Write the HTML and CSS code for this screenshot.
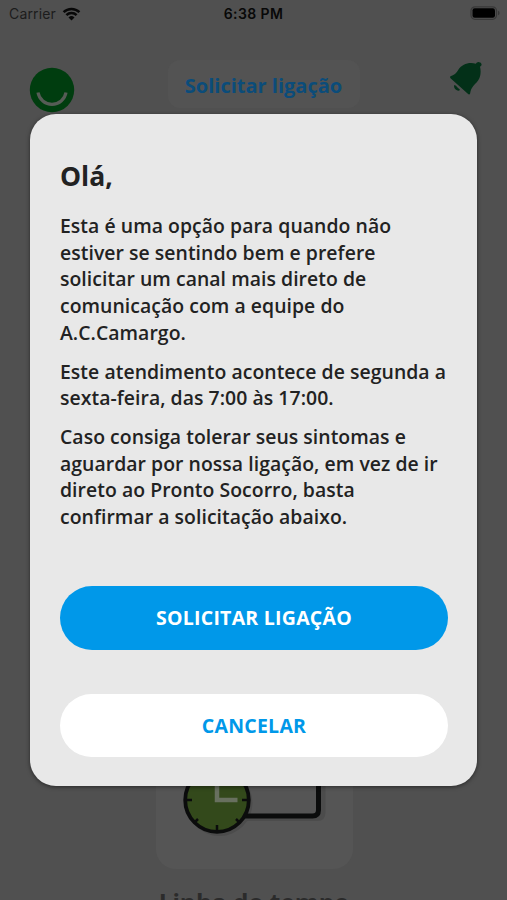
FILE: index.html
```html
<!DOCTYPE html>
<html lang="pt-BR">
<head>
<meta charset="UTF-8">
<meta name="viewport" content="width=device-width, initial-scale=1.0">
<title>Solicitar ligação</title>
<link rel="stylesheet" href="styles.css">
</head>
<body>

<div class="screen">
    <!-- Status bar -->
    <div class="status-bar">
        <div class="carrier">
            <span>Carrier</span>
            <svg width="19" height="14" viewBox="0 0 19 14">
                <path d="M1.6 5.2a11.2 11.2 0 0 1 15.8 0M4.4 8.2a7.2 7.2 0 0 1 10.2 0" fill="none" stroke="#080808" stroke-width="2.5"/>
                <path d="M9.5 13.6L6.5 10.5a4.3 4.3 0 0 1 6 0z" fill="#080808"/>
            </svg>
        </div>
        <span class="time">6:38 PM</span>
        <svg class="battery" width="30" height="15" viewBox="0 0 30 15">
            <rect x="1" y="0.8" width="25.5" height="12.5" rx="4" fill="none" stroke="#383838" stroke-width="1.2"/>
            <rect x="2.5" y="2.3" width="22.5" height="9.5" rx="2.2" fill="#000"/>
            <path d="M28 4.8v4.5q1.6-.6 1.6-2.25T28 4.8z" fill="#383838"/>
        </svg>
    </div>

    <!-- Header -->
    <div class="header">
        <svg class="logo" width="46" height="46" viewBox="0 0 46 46">
            <circle cx="23" cy="23" r="22.2" fill="#003d0f"/>
            <path d="M9 25.5a14.2 14.2 0 0 0 28 0" fill="none" stroke="#565c56" stroke-width="3.2"/>
        </svg>
        <div class="header-title">Solicitar ligação</div>
        <svg class="bell" width="36" height="36" viewBox="0 0 36 36">
            <path d="M2.5 15.2Q7.5 14 10.5 8.5C14 3.3 21 .7 27.8 2.8q1-1.8 2.800-1.7q2.800.4 3 2.200q.1 1.700-1.600 2.500C33.500 12 32.500 18.500 27 23Q22.500 27.500 22 33Q20.800 34.300 19 32L2.500 17.200Q1.500 15.800 2.500 15.200z" fill="#033018"/>
            <path d="M6.2 24Q8.5 24.5 9 26L12 28.7Q11 30.5 8.4 29Q5.4 27 6.2 24z" fill="#033018"/>
        </svg>
    </div>

    <!-- Timeline card -->
    <div class="timeline">
        <div class="timeline-card">
            <svg width="197" height="200" viewBox="0 0 197 200">
                <path d="M65 149.5h96q6 0 6-6V60" fill="none" stroke="#4c4c4c" stroke-width="5"/>
                <circle cx="63.5" cy="134" r="33" fill="#4c4c4c"/>
                <path d="M62 147h94.5q6 0 6-6V60" fill="none" stroke="#0b0c0c" stroke-width="5"/>
                <circle cx="61" cy="131" r="31.8" fill="#33491b" stroke="#0b0c0c" stroke-width="3.8"/>
                <path d="M31 131h5M86 131h5M61 156v5M38.5 153.5l3.5-3.5M83.5 153.5l-3.5-3.5" stroke="#0b0c0c" stroke-width="2.5"/>
                <path d="M61 110v21h20.5" fill="none" stroke="#68705f" stroke-width="4.5"/>
            </svg>
        </div>
        <div class="timeline-title">Linha do tempo</div>
    </div>

    <!-- Confirmation modal -->
    <div class="modal">
        <h2>Olá,</h2>
        <p>Esta é uma opção para quando não<br>
        estiver se sentindo bem e prefere<br>
        solicitar um canal mais direto de<br>
        comunicação com a equipe do<br>
        A.C.Camargo.</p>
        <p>Este atendimento acontece de segunda a<br>
        sexta-feira, das 7:00 às 17:00.</p>
        <p>Caso consiga tolerar seus sintomas e<br>
        aguardar por nossa ligação, em vez de ir<br>
        direto ao Pronto Socorro, basta<br>
        confirmar a solicitação abaixo.</p>
        <div class="btn-container">
            <button class="btn btn-primary">SOLICITAR LIGAÇÃO</button>
            <button class="btn btn-cancel">CANCELAR</button>
        </div>
    </div>
</div>

</body>
</html>
```
FILE: styles.css
```css
body {
    margin: 0;
    font-family: "Open Sans", sans-serif;
    background-color: #505050;
}
.screen {
    position: relative;
    display: flex;
    flex-direction: column;
    height: 900px;
    overflow: hidden;
}
.status-bar {
    display: grid;
    grid-template-columns: 1fr auto 1fr;
    align-items: center;
    height: 27px;
    padding: 0 7px 0 9px;
    box-sizing: border-box;
    font-family: Inter, sans-serif;
    font-size: 14px;
    color: #1c1c1c;
}
.carrier {
    display: flex;
    align-items: center;
    gap: 6px;
    letter-spacing: 0.15px;
}
.time {
    font-weight: 600;
    letter-spacing: 0.4px;
    margin-right: 2px;
    color: #080808;
}
.battery {
    justify-self: end;
}
.header {
    display: flex;
    align-items: flex-start;
    justify-content: space-between;
    padding: 33px 23px 0 29px;
}
.logo {
    margin-top: 7px;
}
.header-title {
    width: 192px;
    height: 48px;
    margin-left: 4px;
    border-radius: 12px;
    background-color: #535353;
    font-size: 20px;
    font-weight: 700;
    line-height: 51px;
    text-align: center;
    white-space: nowrap;
    color: #0b4c7a;
}
.bell {
    margin-top: 1px;
}
.timeline {
    display: flex;
    flex-direction: column;
    align-items: center;
    margin-top: auto;
    padding-left: 1px;
    height: 231px;
}
.timeline-card {
    flex: none;
    width: 197px;
    height: 200px;
    border-radius: 20px;
    background-color: #555;
}
.timeline-title {
    margin-top: 18px;
    font-size: 24.4px;
    font-weight: 700;
    line-height: 32px;
    white-space: nowrap;
    color: #2b2b2b;
}
.modal {
    position: absolute;
    top: 114px;
    left: 30px;
    width: 447px;
    height: 672px;
    padding: 44px 29px 29px 30px;
    box-sizing: border-box;
    display: flex;
    flex-direction: column;
    border-radius: 26px;
    background-color: #e8e8e8;
    box-shadow: 0 1px 4px rgba(0,0,0,0.5);
    color: #222;
}
h2 {
    margin: 0 0 18.3px;
    font-size: 26.5px;
    font-weight: 700;
    line-height: 37px;
}
p {
    margin: 0 0 12.4px;
    font-size: 19.4px;
    font-weight: 600;
    letter-spacing: 0.05px;
    line-height: 26.6px;
    white-space: nowrap;
}
.btn-container {
    display: flex;
    flex-direction: column;
    gap: 44px;
    margin-top: auto;
}
.btn {
    height: 63.5px;
    padding: 0;
    border: none;
    border-radius: 32px;
    font-family: "Open Sans", sans-serif;
    font-size: 19.5px;
    font-weight: 700;
    letter-spacing: 0.25px;
    cursor: pointer;
}
.btn-primary {
    background-color: #0098e9;
    color: white;
}
.btn-cancel {
    background-color: #fff;
    color: #0098e9;
}
```
